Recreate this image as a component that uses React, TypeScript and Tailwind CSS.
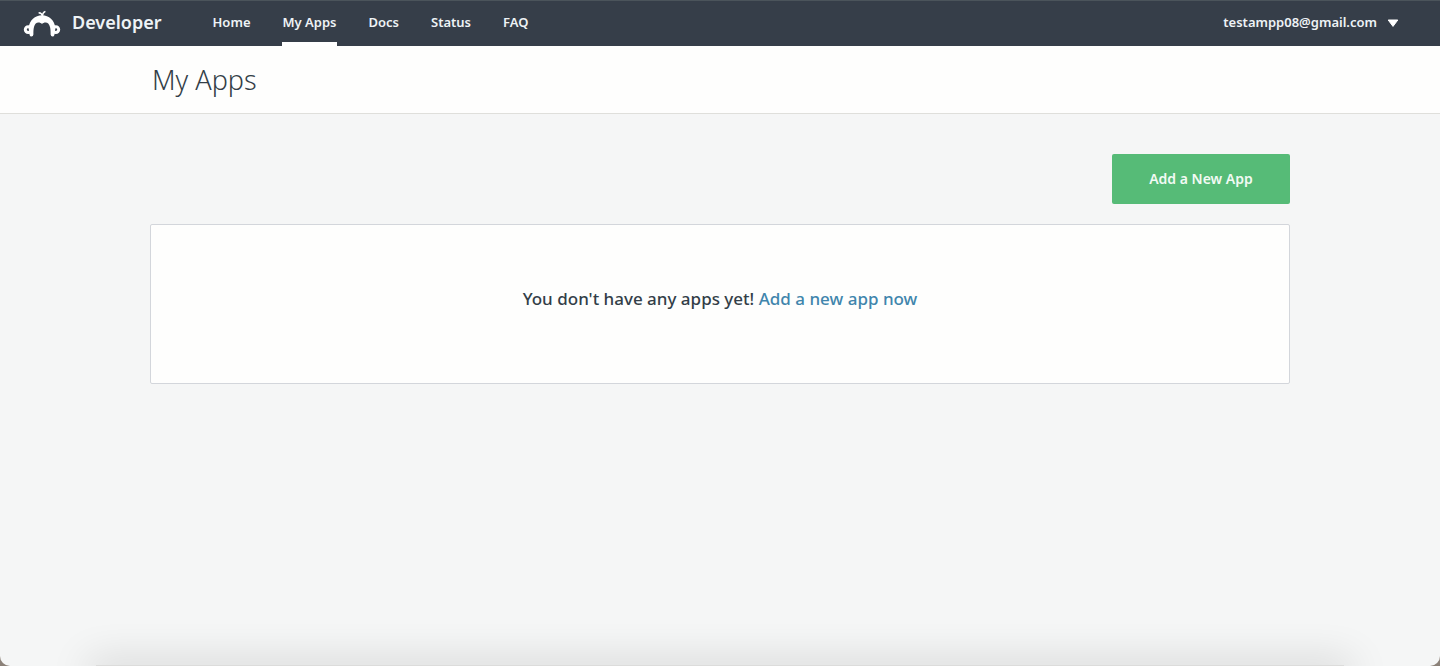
const navLinks = [
  { label: "Home", href: "#home" },
  { label: "My Apps", href: "#apps", active: true },
  { label: "Docs", href: "#docs" },
  { label: "Status", href: "#status" },
  { label: "FAQ", href: "#faq" },
];

function Logo() {
  return (
    <svg className="h-8 w-[38px]" viewBox="0 -2 38 32" fill="none" aria-hidden="true">
      {/* head */}
      <path
        d="M5.6 20C6.4 12 12 7.2 19 7.2S31.6 12 32.4 20L31.4 27Q31 28.6 29.6 28.6Q27.8 28.6 27.6 26.6C27.6 23 27.6 21.5 27 19C26.2 16 24.6 14.6 22.6 14.6C21 14.6 20 15.2 19 16C18 15.2 17 14.6 15.4 14.6C13.4 14.6 11.8 16 11 19C10.4 21.5 10.4 23 10.4 26.6Q10.2 28.6 8.4 28.6Q7 28.6 6.6 27Z"
        fill="white"
      />
      {/* ears */}
      <circle cx="5.2" cy="21.6" r="2.9" stroke="white" strokeWidth="3" />
      <circle cx="32.8" cy="21.6" r="2.9" stroke="white" strokeWidth="3" />
      {/* hair */}
      <path d="M19.4 8C19.2 6 18 5 15.6 4.8M19.4 8C19.5 5.5 20.6 4.1 22.4 3.4" stroke="white" strokeWidth="1.5" />
    </svg>
  );
}

export default function App() {
  return (
    <div className="flex min-h-screen flex-col overflow-hidden bg-[#8b8178] font-['Noto_Sans','Open_Sans',sans-serif] text-[#333e48]">
      <div className="flex flex-1 flex-col overflow-hidden rounded-b-[10px] bg-[#f5f6f6]">
        <header className="flex h-[46px] items-center justify-between border-t border-[#4b545b] bg-[#363e49] pr-[41px] pl-[23px] text-white">
          <div className="flex h-full items-center">
            <a href="#home" className="flex items-center gap-[11px] pb-1 text-lg font-semibold text-[#eef3f6]">
              <Logo />
              Developer
            </a>
            <nav className="ml-[51px] flex h-full gap-8 text-[13px] font-semibold text-[#eef3f6]">
              {navLinks.map((link) => (
                <a
                  key={link.label}
                  href={link.href}
                  className={`flex items-center border-b-4 pt-0.5 ${link.active ? "border-white" : "border-transparent"}`}
                >
                  {link.label}
                </a>
              ))}
            </nav>
          </div>
          <button type="button" className="flex items-center gap-2.5 pb-0.5 text-[13px] font-semibold text-[#eef3f6]">
            testampp08@gmail.com
            <svg className="h-2 w-3" viewBox="0 0 12 8" fill="white" aria-hidden="true">
              <path d="M1.2 1H10.8L6 7.4Z" stroke="white" strokeLinejoin="round" />
            </svg>
          </button>
        </header>

        <div className="border-b border-[#dfdfdb] bg-[#fefefd]">
          <div className="mx-auto w-full max-w-[1140px] px-[2px]">
            <h1 className="py-4 text-[27px] leading-[35px] font-light">My Apps</h1>
          </div>
        </div>

        <main className="mx-auto w-full max-w-[1140px] flex-1 pt-10">
          <div className="flex justify-end">
            <button type="button" className="h-[50px] w-[178px] rounded-xs bg-[#56bb77] text-sm font-semibold text-[#f2faf4]">
              Add a New App
            </button>
          </div>
          <section className="mt-5 flex h-40 items-center justify-center rounded-xs border border-[#d3d6db] bg-[#fefefd] pb-2.5">
            <p className="text-[17px] font-medium">
              You don't have any apps yet!{" "}
              <a href="#new" className="text-[#4085ac]">
                Add a new app now
              </a>
            </p>
          </section>
        </main>

        {/* soft shade along the bottom edge */}
        <div className="mx-24 h-px bg-[#dcdcdb] shadow-[0_6px_40px_8px_rgba(0,0,0,0.2)]" />
      </div>
    </div>
  );
}
